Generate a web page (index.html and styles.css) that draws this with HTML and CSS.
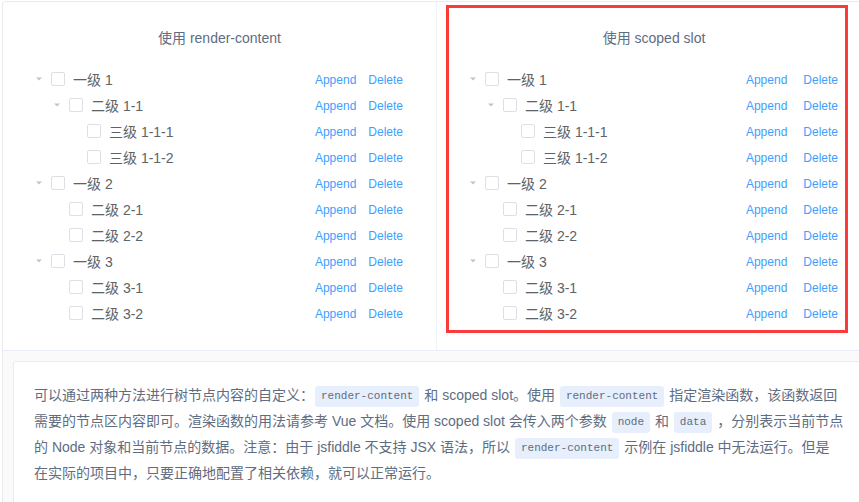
FILE: index.html
```html
<!DOCTYPE html>
<html lang="zh-CN">
<head>
<meta charset="utf-8">
<title>Tree custom content</title>
<link rel="stylesheet" href="styles.css">
</head>
<body>
<div class="demo">
  <div class="source">
    <div class="col">
      <p class="title">使用 render-content</p>
      <div class="tree">
        <div class="node l1"><span class="caret"><svg viewBox="0 0 12 12" width="12" height="12"><polygon points="3,4.5 9,4.5 6,7.5" fill="#c0c4cc"/></svg></span><span class="cb"></span><span class="body"><span class="label">一级 1</span><span class="actions"><a>Append</a><a>Delete</a></span></span></div>
        <div class="node l2"><span class="caret"><svg viewBox="0 0 12 12" width="12" height="12"><polygon points="3,4.5 9,4.5 6,7.5" fill="#c0c4cc"/></svg></span><span class="cb"></span><span class="body"><span class="label">二级 1-1</span><span class="actions"><a>Append</a><a>Delete</a></span></span></div>
        <div class="node l3"><span class="caret leaf"></span><span class="cb"></span><span class="body"><span class="label">三级 1-1-1</span><span class="actions"><a>Append</a><a>Delete</a></span></span></div>
        <div class="node l3"><span class="caret leaf"></span><span class="cb"></span><span class="body"><span class="label">三级 1-1-2</span><span class="actions"><a>Append</a><a>Delete</a></span></span></div>
        <div class="node l1"><span class="caret"><svg viewBox="0 0 12 12" width="12" height="12"><polygon points="3,4.5 9,4.5 6,7.5" fill="#c0c4cc"/></svg></span><span class="cb"></span><span class="body"><span class="label">一级 2</span><span class="actions"><a>Append</a><a>Delete</a></span></span></div>
        <div class="node l2"><span class="caret leaf"></span><span class="cb"></span><span class="body"><span class="label">二级 2-1</span><span class="actions"><a>Append</a><a>Delete</a></span></span></div>
        <div class="node l2"><span class="caret leaf"></span><span class="cb"></span><span class="body"><span class="label">二级 2-2</span><span class="actions"><a>Append</a><a>Delete</a></span></span></div>
        <div class="node l1"><span class="caret"><svg viewBox="0 0 12 12" width="12" height="12"><polygon points="3,4.5 9,4.5 6,7.5" fill="#c0c4cc"/></svg></span><span class="cb"></span><span class="body"><span class="label">一级 3</span><span class="actions"><a>Append</a><a>Delete</a></span></span></div>
        <div class="node l2"><span class="caret leaf"></span><span class="cb"></span><span class="body"><span class="label">二级 3-1</span><span class="actions"><a>Append</a><a>Delete</a></span></span></div>
        <div class="node l2"><span class="caret leaf"></span><span class="cb"></span><span class="body"><span class="label">二级 3-2</span><span class="actions"><a>Append</a><a>Delete</a></span></span></div>
      </div>
    </div>
    <div class="col slot">
      <p class="title">使用 scoped slot</p>
      <div class="tree">
        <div class="node l1"><span class="caret"><svg viewBox="0 0 12 12" width="12" height="12"><polygon points="3,4.5 9,4.5 6,7.5" fill="#c0c4cc"/></svg></span><span class="cb"></span><span class="body"><span class="label">一级 1</span><span class="actions"><a>Append</a><a>Delete</a></span></span></div>
        <div class="node l2"><span class="caret"><svg viewBox="0 0 12 12" width="12" height="12"><polygon points="3,4.5 9,4.5 6,7.5" fill="#c0c4cc"/></svg></span><span class="cb"></span><span class="body"><span class="label">二级 1-1</span><span class="actions"><a>Append</a><a>Delete</a></span></span></div>
        <div class="node l3"><span class="caret leaf"></span><span class="cb"></span><span class="body"><span class="label">三级 1-1-1</span><span class="actions"><a>Append</a><a>Delete</a></span></span></div>
        <div class="node l3"><span class="caret leaf"></span><span class="cb"></span><span class="body"><span class="label">三级 1-1-2</span><span class="actions"><a>Append</a><a>Delete</a></span></span></div>
        <div class="node l1"><span class="caret"><svg viewBox="0 0 12 12" width="12" height="12"><polygon points="3,4.5 9,4.5 6,7.5" fill="#c0c4cc"/></svg></span><span class="cb"></span><span class="body"><span class="label">一级 2</span><span class="actions"><a>Append</a><a>Delete</a></span></span></div>
        <div class="node l2"><span class="caret leaf"></span><span class="cb"></span><span class="body"><span class="label">二级 2-1</span><span class="actions"><a>Append</a><a>Delete</a></span></span></div>
        <div class="node l2"><span class="caret leaf"></span><span class="cb"></span><span class="body"><span class="label">二级 2-2</span><span class="actions"><a>Append</a><a>Delete</a></span></span></div>
        <div class="node l1"><span class="caret"><svg viewBox="0 0 12 12" width="12" height="12"><polygon points="3,4.5 9,4.5 6,7.5" fill="#c0c4cc"/></svg></span><span class="cb"></span><span class="body"><span class="label">一级 3</span><span class="actions"><a>Append</a><a>Delete</a></span></span></div>
        <div class="node l2"><span class="caret leaf"></span><span class="cb"></span><span class="body"><span class="label">二级 3-1</span><span class="actions"><a>Append</a><a>Delete</a></span></span></div>
        <div class="node l2"><span class="caret leaf"></span><span class="cb"></span><span class="body"><span class="label">二级 3-2</span><span class="actions"><a>Append</a><a>Delete</a></span></span></div>
      </div>
      <div class="highlight"></div>
    </div>
  </div>
  <div class="meta">
    <div class="description">可以通过两种方法进行树节点内容的自定义：<code>render-content</code> 和 scoped slot。使用 <code>render-content</code> 指定渲染函数，该函数返回<br>需要的节点区内容即可。渲染函数的用法请参考 Vue 文档。使用 scoped slot 会传入两个参数 <code>node</code> 和 <code>data</code> ，分别表示当前节点<br>的 Node 对象和当前节点的数据。注意：由于 jsfiddle 不支持 JSX 语法，所以 <code>render-content</code> 示例在 jsfiddle 中无法运行。但是<br>在实际的项目中，只要正确地配置了相关依赖，就可以正常运行。</div>
  </div>
</div>
</body>
</html>
```

FILE: styles.css
```css
html, body {
  margin: 0;
  padding: 0;
  overflow: hidden;
  background: #fff;
}

body {
  font-family: "Liberation Sans", "Noto Sans CJK SC", sans-serif;
  font-size: 14px;
  color: #606266;
}

.demo {
  margin: 1px 0 0 2px;
  width: 868px;
  border: 1px solid #ebebeb;
  border-radius: 3px;
}

.source {
  display: flex;
}

.col {
  flex: 0 0 434px;
  box-sizing: border-box;
  padding: 24px;
  position: relative;
}

.col:first-child {
  border-right: 1px solid #eff2f6;
}

.title {
  margin: 0 0 16px;
  line-height: 24px;
  text-align: center;
  font-size: 14px;
  color: #5e6d82;
}

.node {
  display: flex;
  align-items: center;
  height: 26px;
}

.l2 { padding-left: 18px; }
.l3 { padding-left: 36px; }

.caret {
  flex: 0 0 24px;
  height: 24px;
  display: flex;
  align-items: center;
  justify-content: center;
}

.cb {
  flex: 0 0 14px;
  height: 14px;
  box-sizing: border-box;
  border: 1px solid #dcdfe6;
  border-radius: 2px;
  background: #fff;
  margin-right: 8px;
}

.body {
  flex: 1;
  display: flex;
  align-items: center;
  justify-content: space-between;
  padding-right: 9px;
}

.label {
  font-size: 14px;
  color: #606266;
}

.actions a {
  font-size: 12px;
  color: #409eff;
  cursor: pointer;
}

.actions a + a {
  margin-left: 12px;
}

.slot .actions a + a {
  margin-left: 16px;
}

.highlight {
  position: absolute;
  left: 9px;
  top: 3px;
  width: 402px;
  height: 328px;
  box-sizing: border-box;
  border: 3px solid #fb3a3a;
  pointer-events: none;
}

.meta {
  border-top: 1px solid #eaeefb;
  background: #fafafa;
  padding: 10px;
}

.description {
  box-sizing: border-box;
  border: 1px solid #ebebeb;
  border-radius: 3px;
  background: #fff;
  padding: 20px;
  font-size: 14px;
  line-height: 26px;
  color: #5e6d82;
  white-space: nowrap;
  height: 200px;
}

.description code {
  display: inline-block;
  margin: 0 1px;
  padding: 0 6px;
  height: 21px;
  line-height: 21px;
  box-sizing: border-box;
  font-family: "Liberation Mono", monospace;
  font-size: 11px;
  color: #5e6d82;
  background-color: #e6effb;
  border-radius: 3px;
  vertical-align: middle;
}
```
